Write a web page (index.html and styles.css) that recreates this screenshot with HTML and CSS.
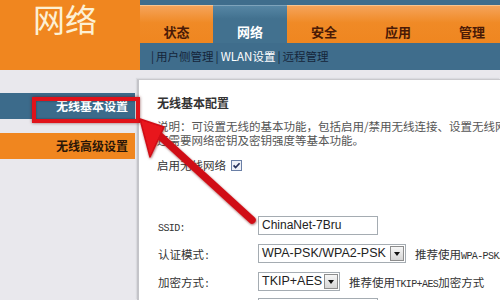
FILE: index.html
```html
<!DOCTYPE html>
<html lang="zh-CN">
<head>
<meta charset="utf-8">
<title>网络 - WLAN设置</title>
<link rel="stylesheet" href="styles.css">
</head>
<body>
<div class="page">
  <header class="top">
    <div class="brand">网络</div>
    <div class="nav">
      <div class="tabs">
        <div class="tab first">状态</div>
        <div class="tab active">网络</div>
        <div class="tab">安全</div>
        <div class="tab">应用</div>
        <div class="tab">管理</div>
      </div>
      <div class="subnav">
        <span class="sep">|</span><span>用户侧管理</span><span class="sep">|</span><span class="cur">WLAN设置</span><span class="sep">|</span><span>远程管理</span>
      </div>
    </div>
  </header>
  <div class="main">
    <aside class="side">
      <div class="item blue">无线基本设置</div>
      <div class="item orange">无线高级设置</div>
    </aside>
    <section class="panel">
      <h2 class="heading">无线基本配置</h2>
      <div class="desc">
        <p class="line">说明：可设置无线的基本功能，包括启用/禁用无线连接、设置无线网络名称、认证模式等，</p>
        <p class="line">还需要网络密钥及密钥强度等基本功能。</p>
      </div>
      <div class="enable">
        <span>启用无线网络</span>
        <svg class="chk" width="11" height="11" viewBox="0 0 11 11"><rect x=".5" y=".5" width="10" height="10" fill="#eef1f8" stroke="#6a7fa6"/><path d="M2.6 5.4 L4.6 7.6 L8.6 3.2" fill="none" stroke="#27325c" stroke-width="1.7"/></svg>
      </div>
      <div class="form">
        <div class="row">
          <span class="label"><span class="mono">SSID:</span></span>
          <div class="input">ChinaNet-7Bru</div>
        </div>
        <div class="row">
          <span class="label">认证模式<span class="mono">:</span></span>
          <div class="select wide"><span class="sel-text">WPA-PSK/WPA2-PSK</span><span class="sel-btn"><i class="tri"></i></span></div>
          <span class="hint">推荐使用<span class="mono">WPA-PSK/WPA2-PSK</span>认证模式</span>
        </div>
        <div class="row">
          <span class="label">加密方式<span class="mono">:</span></span>
          <div class="select narrow"><span class="sel-text">TKIP+AES</span><span class="sel-btn"><i class="tri"></i></span></div>
          <span class="hint">推荐使用<span class="mono">TKIP+AES</span>加密方式</span>
        </div>
        <div class="row last">
          <span class="label">密钥<span class="mono">:</span></span>
          <div class="input"></div>
        </div>
      </div>
    </section>
  </div>
  <div class="mark"></div>
  <svg class="arrow" width="500" height="300" viewBox="0 0 500 300">
    <defs>
      <filter id="sh" x="-20%" y="-20%" width="140%" height="140%">
        <feDropShadow dx="0.5" dy="1" stdDeviation="1" flood-color="#600" flood-opacity="0.6"/>
      </filter>
    </defs>
    <g filter="url(#sh)" fill="#e8141c" stroke="#d00f16">
      <line x1="252" y1="220" x2="160" y2="136" stroke-width="7.5" stroke-linecap="round"/>
      <polygon points="140,119 164,127 150,157" stroke-width="1.5" stroke-linejoin="round"/>
    </g>
  </svg>
</div>
</body>
</html>
```
FILE: styles.css
```css
* { box-sizing: border-box; margin: 0; padding: 0; }
html, body { width: 500px; height: 300px; overflow: hidden; }
body {
  font-family: "Noto Sans CJK SC", "Liberation Sans", sans-serif;
  background: #e9e8ed;
  color: #333;
}
.page { position: relative; width: 500px; height: 300px; overflow: hidden; }

.top { display: flex; height: 70px; }
.brand {
  width: 140px;
  background: #f0861f;
  color: #fdf0d4;
  font-size: 32px;
  line-height: 46px;
  padding: 0 0 0 33px;
  margin-top: -5px;
  height: 75px;
}
.nav { flex: 1; background: #3f6d8c; display: flex; flex-direction: column; min-width: 0; }
.tabs { display: flex; margin-top: 5px; height: 38px; }
.tab {
  flex: 0 0 74px;
  background: linear-gradient(#f5a35a, #f08a26 45%, #ef8620);
  border-top: 1px solid #f9c48e;
  color: #4a1a06;
  font-size: 13px;
  font-weight: bold;
  line-height: 18px;
  padding-top: 17px;
  text-align: center;
}
.tab.first { flex-basis: 73px; }
.tab.active {
  background: linear-gradient(#5686a4, #42718f 35%);
  border-top-color: #7ea3bb;
  color: #fff;
}
.subnav {
  height: 27px;
  line-height: 27px;
  font-size: 11.5px;
  color: #15253a;
  padding-left: 9px;
  white-space: nowrap;
}
.subnav .sep { margin: 0 2px; }
.subnav .cur { color: #fff; }

.main { display: flex; padding-top: 9px; height: 230px; }
.side { width: 137px; padding-top: 14px; }
.item {
  width: 135px;
  height: 26px;
  line-height: 26px;
  font-size: 12px;
  font-weight: bold;
  text-align: right;
  padding-right: 7px;
}
.item.blue { background: #3c6b8b; color: #fff; margin-bottom: 14px; }
.item.orange { background: #f0861f; color: #2a1608; }

.panel {
  flex: 1;
  min-width: 0;
  background: #fff;
  border-left: 2px solid #c4c4c9;
  border-top: 1px solid #c9c9cd;
  box-shadow: -1px -1px 1px #dadadf;
  padding: 16px 0 0 18px;
  overflow: hidden;
}
.heading { font-size: 12px; font-weight: bold; line-height: 14px; color: #333; }
.desc { margin-top: 9px; font-size: 11.5px; line-height: 14px; color: #555; white-space: nowrap; }
.enable {
  margin-top: 11px;
  display: flex;
  align-items: center;
  height: 14px;
  font-size: 11.5px;
  color: #333;
}
.chk { margin-left: 5px; }

.form { margin-top: 44px; }
.row { display: flex; align-items: center; height: 19px; white-space: nowrap; }
.row + .row { margin-top: 9px; }
.row.last { margin-top: 7px; }
.label { width: 101px; flex: 0 0 101px; font-size: 11.5px; color: #333; padding-left: 1px; }
.mono { font-family: "Liberation Mono", "DejaVu Sans Mono", monospace; font-size: 10px; letter-spacing: -0.6px; }
.input {
  width: 120px;
  height: 19px;
  border: 1px solid #a5acb2;
  font-family: "Liberation Sans", Arial, sans-serif;
  font-size: 12px;
  line-height: 17px;
  padding-left: 3px;
  color: #222;
}
.select {
  display: flex;
  align-items: center;
  height: 19px;
  border: 1px solid #a5acb2;
  background: #fff;
  flex: 0 0 auto;
}
.select.wide { width: 148px; }
.select.narrow { width: 82px; }
.sel-text {
  flex: 1;
  font-family: "Liberation Sans", Arial, sans-serif;
  font-size: 12.5px;
  color: #222;
  padding-left: 3px;
  line-height: 17px;
}
.sel-btn {
  width: 14px;
  height: 15px;
  margin-right: 1px;
  border: 1px solid #8d8d8d;
  background: linear-gradient(#f6f6f6, #d6d6d6);
  display: flex;
  align-items: center;
  justify-content: center;
}
.tri {
  width: 0; height: 0;
  border-left: 3.5px solid transparent;
  border-right: 3.5px solid transparent;
  border-top: 4px solid #111;
}
.hint { margin-left: 9px; font-size: 11.5px; color: #333; }

.mark {
  position: absolute;
  left: 32px;
  top: 97px;
  width: 108px;
  height: 26px;
  border: 4px solid #e0121a;
  box-shadow: 0 0 3px rgba(90, 0, 0, 0.6), inset 0 0 2px rgba(0, 0, 0, 0.45);
}
.arrow { position: absolute; left: 0; top: 0; pointer-events: none; }
```
